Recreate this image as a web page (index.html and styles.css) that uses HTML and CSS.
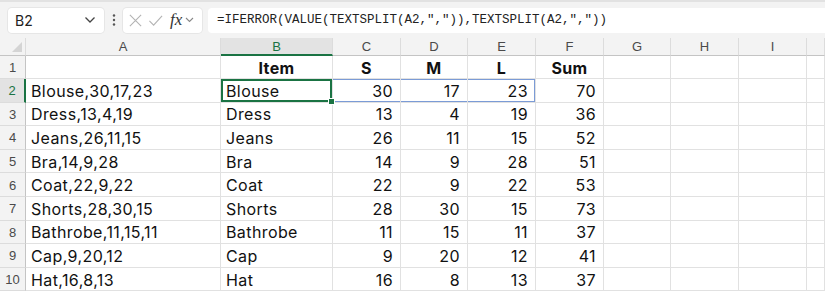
FILE: index.html
```html
<!DOCTYPE html>
<html lang="en">
<head>
  <meta charset="UTF-8">
  <title>Sheet</title>
  <link rel="stylesheet" href="styles.css">
</head>
<body>

<div class="toolbar">
  <div class="namebox">
    <span>B2</span>
    <svg width="12" height="8" viewBox="0 0 12 8"><path d="M1.5 1.5 L6 6 L10.5 1.5" fill="none" stroke="#444" stroke-width="1.3"/></svg>
  </div>
  <div class="dots">
    <svg width="4" height="14" viewBox="0 0 4 14"><circle cx="2" cy="2.5" r="1.2" fill="#555"/><circle cx="2" cy="7" r="1.2" fill="#555"/><circle cx="2" cy="11.5" r="1.2" fill="#555"/></svg>
  </div>
  <div class="fxbox">
    <svg width="15" height="15" viewBox="0 0 16 16"><path d="M2 2 L14 14 M14 2 L2 14" stroke="#b4b4b4" stroke-width="1.2"/></svg>
    <svg width="15" height="15" viewBox="0 0 16 16"><path d="M1.5 8.5 L6 13 L15 3" fill="none" stroke="#b4b4b4" stroke-width="1.2"/></svg>
    <span class="fx">fx</span>
    <svg width="9" height="8" viewBox="0 0 9 8"><path d="M1 2 L4.5 5.5 L8 2" fill="none" stroke="#888" stroke-width="1.1"/></svg>
  </div>
  <div class="formula">=IFERROR(VALUE(TEXTSPLIT(A2,",")),TEXTSPLIT(A2,","))</div>
</div>

<div class="sheet">
  <div class="hd corner"></div>
  <div class="hd">A</div>
  <div class="hd sel-col">B</div>
  <div class="hd">C</div>
  <div class="hd">D</div>
  <div class="hd">E</div>
  <div class="hd">F</div>
  <div class="hd">G</div>
  <div class="hd">H</div>
  <div class="hd">I</div>
  <div class="hd"></div>

  <div class="rh">1</div>
  <div class="c"></div>
  <div class="c b ctr">Item</div>
  <div class="c b ctr">S</div>
  <div class="c b ctr">M</div>
  <div class="c b ctr">L</div>
  <div class="c b ctr">Sum</div>
  <div class="c"></div><div class="c"></div><div class="c"></div><div class="c"></div>

  <div class="rh sel-row">2</div>
  <div class="c">Blouse,30,17,23</div>
  <div class="c active">Blouse<span class="handle"></span></div>
  <div class="c n spill">30</div>
  <div class="c n spill">17</div>
  <div class="c n spill spill-end">23</div>
  <div class="c n">70</div>
  <div class="c"></div><div class="c"></div><div class="c"></div><div class="c"></div>

  <div class="rh">3</div>
  <div class="c">Dress,13,4,19</div>
  <div class="c">Dress</div>
  <div class="c n">13</div><div class="c n">4</div><div class="c n">19</div><div class="c n">36</div>
  <div class="c"></div><div class="c"></div><div class="c"></div><div class="c"></div>

  <div class="rh">4</div>
  <div class="c">Jeans,26,11,15</div>
  <div class="c">Jeans</div>
  <div class="c n">26</div><div class="c n">11</div><div class="c n">15</div><div class="c n">52</div>
  <div class="c"></div><div class="c"></div><div class="c"></div><div class="c"></div>

  <div class="rh">5</div>
  <div class="c">Bra,14,9,28</div>
  <div class="c">Bra</div>
  <div class="c n">14</div><div class="c n">9</div><div class="c n">28</div><div class="c n">51</div>
  <div class="c"></div><div class="c"></div><div class="c"></div><div class="c"></div>

  <div class="rh">6</div>
  <div class="c">Coat,22,9,22</div>
  <div class="c">Coat</div>
  <div class="c n">22</div><div class="c n">9</div><div class="c n">22</div><div class="c n">53</div>
  <div class="c"></div><div class="c"></div><div class="c"></div><div class="c"></div>

  <div class="rh">7</div>
  <div class="c">Shorts,28,30,15</div>
  <div class="c">Shorts</div>
  <div class="c n">28</div><div class="c n">30</div><div class="c n">15</div><div class="c n">73</div>
  <div class="c"></div><div class="c"></div><div class="c"></div><div class="c"></div>

  <div class="rh">8</div>
  <div class="c">Bathrobe,11,15,11</div>
  <div class="c">Bathrobe</div>
  <div class="c n">11</div><div class="c n">15</div><div class="c n">11</div><div class="c n">37</div>
  <div class="c"></div><div class="c"></div><div class="c"></div><div class="c"></div>

  <div class="rh">9</div>
  <div class="c">Cap,9,20,12</div>
  <div class="c">Cap</div>
  <div class="c n">9</div><div class="c n">20</div><div class="c n">12</div><div class="c n">41</div>
  <div class="c"></div><div class="c"></div><div class="c"></div><div class="c"></div>

  <div class="rh">10</div>
  <div class="c">Hat,16,8,13</div>
  <div class="c">Hat</div>
  <div class="c n">16</div><div class="c n">8</div><div class="c n">13</div><div class="c n">37</div>
  <div class="c"></div><div class="c"></div><div class="c"></div><div class="c"></div>
</div>

</body>
</html>
```

FILE: styles.css
```css
body {
  margin: 0;
  background: #ffffff;
  font-family: 'Inter', 'Liberation Sans', sans-serif;
  overflow: hidden;
}

.toolbar {
  height: 38px;
  box-sizing: border-box;
  background: #f3f3f3;
  border-top: 2px solid #e2e2e2;
  display: flex;
  align-items: center;
  padding: 0 0 0 8px;
}

.toolbar svg {
  flex-shrink: 0;
}

.namebox {
  width: 96px;
  height: 25px;
  box-sizing: border-box;
  background: #ffffff;
  border-radius: 4px;
  box-shadow: 0 0 0 1px #e6e6e6;
  display: flex;
  align-items: center;
  justify-content: space-between;
  padding: 0 8px 0 7px;
  font-size: 14px;
  color: #222;
}

.dots {
  width: 19px;
  display: flex;
  justify-content: center;
  align-items: center;
}

.fxbox {
  width: 79px;
  height: 25px;
  flex-shrink: 0;
  box-sizing: border-box;
  background: #ffffff;
  border-radius: 4px;
  box-shadow: 0 0 0 1px #e6e6e6;
  display: flex;
  align-items: center;
  gap: 5px;
  padding: 0 3px 0 5px;
}

.fx {
  font-family: 'Liberation Serif', serif;
  font-style: italic;
  font-size: 17px;
  color: #333;
  margin-left: 2px;
  margin-right: -2px;
}

.formula {
  flex: 1;
  margin-left: 6px;
  height: 25px;
  box-sizing: border-box;
  background: #ffffff;
  border-radius: 4px 0 0 4px;
  display: flex;
  align-items: center;
  padding-left: 9px;
  font-family: 'Liberation Mono', monospace;
  font-size: 12.5px;
  color: #222;
}

.sheet {
  display: grid;
  grid-template-columns: 26px 195px 112px 68px 67px 68px 68px 67px 68px 68px 1fr;
  grid-template-rows: 18px 23px;
  grid-auto-rows: 23.6px;
}

.hd {
  background: #f3f3f3;
  border-right: 1px solid #dcdcdc;
  border-bottom: 1px solid #c4c4c4;
  box-sizing: border-box;
  font-size: 13px;
  color: #4a4a4a;
  font-family: 'Liberation Sans', sans-serif;
  display: flex;
  align-items: center;
  justify-content: center;
}

.corner {
  position: relative;
}

.corner::after {
  content: '';
  position: absolute;
  right: 3px;
  bottom: 3px;
  border-left: 10px solid transparent;
  border-bottom: 10px solid #d4d4d4;
}

.sel-col {
  background: #e3e3e3;
  color: #1a7343;
  border-bottom: 2px solid #1a7343;
}

.rh {
  background: #f3f3f3;
  border-right: 1px solid #c4c4c4;
  border-bottom: 1px solid #dcdcdc;
  box-sizing: border-box;
  font-size: 13px;
  color: #4a4a4a;
  font-family: 'Liberation Sans', sans-serif;
  display: flex;
  align-items: center;
  justify-content: center;
  padding-top: 1px;
}

.sel-row {
  background: #e3e3e3;
  color: #1a7343;
  border-right: 2px solid #1a7343;
}

.c {
  border-right: 1px solid #e1e1e1;
  border-bottom: 1px solid #e1e1e1;
  box-sizing: border-box;
  font-size: 16px;
  letter-spacing: 0.4px;
  color: #111;
  display: flex;
  align-items: center;
  padding: 1px 5px 0;
  white-space: nowrap;
}

.b {
  font-weight: 700;
}

.ctr {
  justify-content: center;
}

.n {
  justify-content: flex-end;
  padding-right: 7px;
}

.spill {
  box-shadow: inset 0 1px 0 #7b9bd6, inset 0 -1px 0 #7b9bd6;
}

.spill-end {
  box-shadow: inset 0 1px 0 #7b9bd6, inset 0 -1px 0 #7b9bd6, inset -1px 0 0 #7b9bd6;
}

.active {
  position: relative;
  box-shadow: inset 0 0 0 2px #1a7343;
}

.handle {
  position: absolute;
  right: -3px;
  bottom: -3px;
  width: 5px;
  height: 5px;
  background: #1a7343;
  border: 1px solid #ffffff;
}
```
